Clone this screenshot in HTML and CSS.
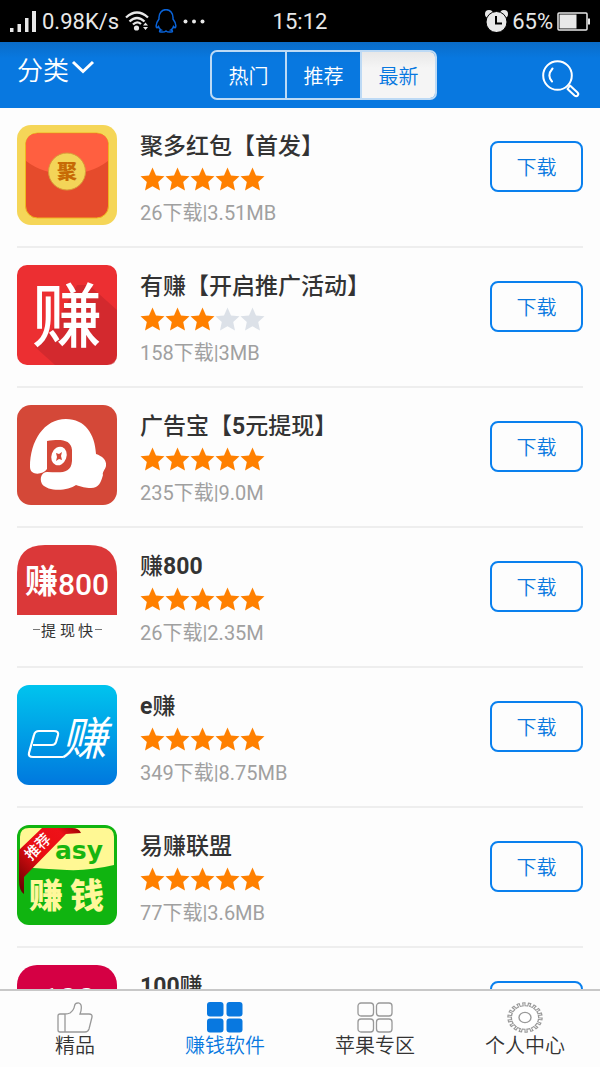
FILE: index.html
```html
<!DOCTYPE html>
<html lang="zh-CN">
<head>
  <title>赚钱软件</title>
  <meta charset="utf-8"/>
  <meta name="viewport" content="width=device-width, initial-scale=1">
  <link rel="stylesheet" href="styles.css">
</head>
<body>
  <!-- shared shapes -->
  <svg class="defs" width="0" height="0">
    <symbol id="star" viewBox="0 0 25 24">
      <path d="M12.5 .5 L16 8.500 L24.500 9.300 L18.200 15 L20 23.500 L12.5 19.300 L5 23.500 L6.800 15 L.5 9.300 L9 8.500 Z"/>
    </symbol>
    <symbol id="stars" viewBox="0 0 125 24">
      <use href="#star" x="0" width="25" height="24"/>
      <use href="#star" x="25" width="25" height="24"/>
      <use href="#star" x="50" width="25" height="24"/>
      <use href="#star" x="75" width="25" height="24"/>
      <use href="#star" x="100" width="25" height="24"/>
    </symbol>
  </svg>

  <div class="status">
    <div class="status-left">
      <svg width="26" height="21" viewBox="0 0 26 21" fill="#e8e8e8">
        <path d="M0 17h3.500v4H0zM7.500 13h3.500v8H7.500zM15 7h3.500v14H15zM22 0h4v21h-4z"/>
      </svg>
      <span>0.98K/s</span>
      <svg width="24" height="20" viewBox="0 0 24 20" fill="none" stroke="#e8e8e8" stroke-width="2.300">
        <path d="M1 6.500Q12 -3.500 23 6.500M4.500 10.500Q12 3.500 19.500 10.500M8 13.500Q12 9.500 16 13"/>
        <circle cx="11.500" cy="17" r="2.600" fill="#e8e8e8" stroke="none"/>
        <path d="M18 14.500l2.500-3 2.500 3zM18 16l2.500 3 2.500-3z" fill="#e8e8e8" stroke="none"/>
      </svg>
      <svg width="22" height="24" viewBox="0 0 22 24" fill="none" stroke="#0a63d8" stroke-width="1.500">
        <path d="M4 10C3 -2.500 19 -2.500 18 10C19.500 12 21.500 16 20.500 18.500C20 19.500 19 18 18.500 17.500C18 19.500 17 20.500 16 21C18 21.500 18 23 16 23C13.500 23.300 12 23 11 22C10 23 8.500 23.300 6 23C4 23 4 21.500 6 21C5 20.500 4 19.500 3.500 17.500C3 18 2 19.500 1.500 18.500C.5 16 2.500 12 4 10Z"/>
      </svg>
      <svg width="22" height="5" viewBox="0 0 22 5" fill="#e8e8e8">
        <circle cx="2.500" cy="2.500" r="2"/><circle cx="11" cy="2.500" r="2"/><circle cx="19.500" cy="2.500" r="2"/>
      </svg>
    </div>
    <span>15:12</span>
    <div class="status-right">
      <svg width="23" height="22" viewBox="0 0 23 22">
        <circle cx="4" cy="4" r="4" fill="#e8e8e8"/><circle cx="19" cy="4" r="4" fill="#e8e8e8"/>
        <circle cx="11.500" cy="12" r="10.500" fill="#e8e8e8" stroke="#000"/>
        <path d="M11 6v7.500h6" fill="none" stroke="#000" stroke-width="2"/>
      </svg>
      <span>65%</span>
      <svg width="33" height="19" viewBox="0 0 33 19">
        <rect x="1" y="1" width="29" height="17" rx="1" fill="none" stroke="#e8e8e8" stroke-width="1.500"/>
        <rect x="2.500" y="2.500" width="17" height="14" fill="#e8e8e8"/>
        <path d="M31 6.500h2v6h-2z" fill="#e8e8e8"/>
      </svg>
    </div>
  </div>

  <header class="header">
    <button class="category">分类<svg width="24" height="14" viewBox="0 0 24 14" fill="none" stroke="#fff" stroke-width="3"><path d="M2 2l10 9.500L22 2"/></svg></button>
    <div class="segment">
      <button>热门</button>
      <button>推荐</button>
      <button class="active">最新</button>
    </div>
    <button class="search" aria-label="搜索">
      <svg width="38" height="38" viewBox="0 0 38 38" fill="none" stroke="#fff" stroke-width="2">
        <circle cx="15.500" cy="15.500" r="14.300"/>
        <path d="M10.500 8.500Q4.500 15.500 10 21.500M25.500 29l2.500-3.500 7.500 7c2 2-.5 5-3 3z" stroke-linecap="round" stroke-linejoin="round"/>
      </svg>
    </button>
  </header>

  <main class="list">
    <article class="app">
      <svg class="logo" viewBox="0 0 100 100">
        <rect width="100" height="100" rx="14" fill="#f5d658"/>
        <rect x="8.500" y="8" width="83" height="85" rx="12" fill="#e54b2c" stroke="#f0b51e"/>
        <path d="M9 36V20Q9 8.500 21 8.500H79Q91 8.500 91 20V36Q74 49 50 49T9 36Z" fill="#ff5f40"/>
        <circle cx="50" cy="46.500" r="18.500" fill="#f3d458" stroke="#d99a38"/>
        <text x="50" y="54" font-size="20" font-weight="900" fill="#c76a05" text-anchor="middle">聚</text>
      </svg>
      <div class="info">
        <h2>聚多红包【首发】</h2>
        <svg class="stars"><use href="#stars"/></svg>
        <p>26下载|3.51MB</p>
      </div>
      <button class="download">下载</button>
    </article>

    <article class="app">
      <svg class="logo" viewBox="0 0 100 100">
        <rect width="100" height="100" rx="10" fill="#ec2f32"/>
        <path d="M72 20L100 45V90Q100 100 90 100H38L18 82L35 65L60 20Z" fill="#c3262b" opacity=".6"/>
        <text x="50" y="77" font-size="70" font-weight="500" fill="#fff" text-anchor="middle">赚</text>
      </svg>
      <div class="info">
        <h2>有赚【开启推广活动】</h2>
        <svg class="stars" viewBox="0 0 125 24">
          <use href="#star" x="0" width="25" height="24"/>
          <use href="#star" x="25" width="25" height="24"/>
          <use href="#star" x="50" width="25" height="24"/>
          <use class="off" href="#star" x="75" width="25" height="24"/>
          <use class="off" href="#star" x="100" width="25" height="24"/>
        </svg>
        <p>158下载|3MB</p>
      </div>
      <button class="download">下载</button>
    </article>

    <article class="app">
      <svg class="logo" viewBox="0 0 100 100">
        <rect width="100" height="100" rx="14" fill="#d44838"/>
        <path d="M13 62C13 36 27 14 49 14C68 14 78 29 79 49C85 51 90 55 89 61C88 65 85 67 86 70C84 77 82 83 74 83C68 83 65 82 59 80C51 86 31 87 25 79C22 73 25 67 30 67C42 67 54 70 55 56V45C54 34 43 34 30 36V64C26 70 13 71 13 62Z" fill="#fff"/>
        <ellipse cx="42" cy="51" rx="7.500" ry="9.500" fill="#fff" transform="rotate(20 42 51)"/>
        <path d="M39 48l3 1 3-2-1 4 1 4-3-1-3 2 1-4z" fill="#d44838"/>
      </svg>
      <div class="info">
        <h2>广告宝【<b>5</b>元提现】</h2>
        <svg class="stars"><use href="#stars"/></svg>
        <p>235下载|9.0M</p>
      </div>
      <button class="download">下载</button>
    </article>

    <article class="app">
      <svg class="logo" viewBox="0 0 100 100">
        <path d="M0 70V28Q0 0 28 0H72Q100 0 100 28V70Z" fill="#db3839"/>
        <text x="8" y="48" font-size="33" font-weight="700" fill="#fff">赚</text>
        <text x="41" y="50" font-size="30" font-weight="500" fill="#fff">800</text>
        <text x="24" y="91" font-size="15" font-weight="400" fill="#333">提</text>
        <text x="43" y="91" font-size="15" font-weight="400" fill="#333">现</text>
        <text x="61" y="91" font-size="15" font-weight="400" fill="#333">快</text>
        <path d="M16 84.500h7M78 84.500h7" stroke="#777"/>
      </svg>
      <div class="info">
        <h2>赚<b>800</b></h2>
        <svg class="stars"><use href="#stars"/></svg>
        <p>26下载|2.35M</p>
      </div>
      <button class="download">下载</button>
    </article>

    <article class="app">
      <svg class="logo" viewBox="0 0 100 100">
        <linearGradient id="sky" x2="0" y2="1"><stop stop-color="#00c4ee"/><stop offset="1" stop-color="#0078de"/></linearGradient>
        <rect width="100" height="100" rx="12" fill="url(#sky)"/>
        <path d="M16 60H35Q38 60 39 57L41 50Q42 46 37 46H22Q18 46 17 50L12 68Q11 72 16 72H46" fill="none" stroke="#fff" stroke-width="2.200"/>
        <text x="44" y="70" font-size="46" fill="#fff" font-style="italic">赚</text>
      </svg>
      <div class="info">
        <h2><b>e</b>赚</h2>
        <svg class="stars"><use href="#stars"/></svg>
        <p>349下载|8.75MB</p>
      </div>
      <button class="download">下载</button>
    </article>

    <article class="app">
      <svg class="logo" viewBox="0 0 100 100">
        <linearGradient id="ribbon" x1="0" y1="1" x2="1" y2="0"><stop stop-color="#5a0000"/><stop offset=".45" stop-color="#e90d12"/><stop offset=".8" stop-color="#ee1118"/><stop offset="1" stop-color="#900"/></linearGradient>
        <rect width="100" height="100" rx="12" fill="#10b410"/>
        <path d="M3 12Q3 3 12 3H88Q97 3 97 12V40Q72 46 50 45T3 42Z" fill="#fff894"/>
        <text x="38" y="34" font-family="DejaVu Sans" font-size="25" font-weight="700" fill="#18b510">asy</text>
        <text x="12" y="83" font-size="34" font-weight="900" fill="#fff79b">赚</text>
        <text x="53" y="83" font-size="34" font-weight="900" fill="#fff79b">钱</text>
        <path d="M2 25L25 3H55Q62 3 64 8L49 9L7 52V69Q2 66 2 55Z" fill="url(#ribbon)"/>
        <text x="21" y="27" font-size="15" font-weight="500" fill="#fff" text-anchor="middle" transform="rotate(-45 21 22)">推荐</text>
      </svg>
      <div class="info">
        <h2>易赚联盟</h2>
        <svg class="stars"><use href="#stars"/></svg>
        <p>77下载|3.6MB</p>
      </div>
      <button class="download">下载</button>
    </article>

    <article class="app">
      <svg class="logo" viewBox="0 0 100 100">
        <rect width="100" height="100" rx="20" fill="#d50044"/>
        <text x="51" y="45" font-size="32" font-weight="700" fill="#fff" text-anchor="middle">100</text>
      </svg>
      <div class="info">
        <h2><b>100</b>赚</h2>
        <svg class="stars"><use href="#stars"/></svg>
      </div>
      <button class="download">下载</button>
    </article>
  </main>

  <nav class="tabs">
    <a href="#">
      <svg width="36" height="31" viewBox="0 0 36 31" fill="none" stroke="#999" stroke-width="1.300">
        <path d="M8 12H3Q1 12 1 14V28Q1 30 3 30H28Q31 30 32 27L35 15Q35.500 12 32 12H23Q25 7 24 3Q23 .500 20.500 1Q18 1 17.500 4Q17 8 13 11Q11 12 8 12V30"/>
      </svg>
      <span>精品</span>
    </a>
    <a href="#" class="current">
      <svg width="36" height="31" viewBox="0 0 36 31" fill="#0878e0">
        <rect width="16.500" height="14.500" rx="3"/><rect x="19.500" width="16" height="14.500" rx="3"/>
        <rect y="16.500" width="16.500" height="14" rx="3"/><rect x="19.500" y="16.500" width="16" height="14" rx="3"/>
      </svg>
      <span>赚钱软件</span>
    </a>
    <a href="#">
      <svg width="36" height="31" viewBox="0 0 36 31" fill="none" stroke="#999" stroke-width="1.300">
        <rect x="1" y="1" width="15.500" height="13" rx="3"/><rect x="19.500" y="1" width="15.500" height="13" rx="3"/>
        <rect x="1" y="17" width="15.500" height="13" rx="3"/><rect x="19.500" y="17" width="15.500" height="13" rx="3"/>
      </svg>
      <span>苹果专区</span>
    </a>
    <a href="#">
      <svg width="36" height="31" viewBox="0 0 36 36" preserveAspectRatio="none" fill="none">
        <circle cx="18" cy="18" r="15.500" pathLength="36" stroke="#999" stroke-width="4.500" stroke-dasharray="1.200 .800"/>
        <circle cx="18" cy="18" r="14.300" fill="#999"/>
        <circle cx="18" cy="18" r="14.300" pathLength="36" stroke="#fff" stroke-width="4.500" stroke-dasharray=".350 1.650" stroke-dashoffset="-.425"/>
        <circle cx="18" cy="18" r="13" fill="#fff"/>
        <circle cx="18" cy="18" r="6" stroke="#999" stroke-width="1.400"/>
      </svg>
      <span>个人中心</span>
    </a>
  </nav>
</body>
</html>
```

FILE: styles.css
```css
* {
	box-sizing: border-box;
}
body {
	margin: 0;
	height: 100vh;
	display: flex;
	flex-direction: column;
	background: #fdfdfd;
	color: #333;
	font-family: Roboto, "Noto Sans CJK SC", sans-serif;
	font-size: 20px;
}
.defs {
	position: absolute;
}
button {
	padding: 0;
	border: 0;
	background: none;
	font: inherit;
	color: inherit;
	cursor: pointer;
}

/* status bar */
.status {
	flex: none;
	display: grid;
	grid-template-columns: 1fr auto 1fr;
	align-items: center;
	height: 42px;
	padding: 0 10px;
	background: #000;
	color: #e8e8e8;
	font-size: 22px;
}
.status-left,
.status-right {
	display: flex;
	align-items: center;
	gap: 6px;
}
.status-right {
	justify-content: flex-end;
	gap: 4px;
}

/* header */
.header {
	flex: none;
	display: flex;
	justify-content: space-between;
	align-items: flex-start;
	height: 66px;
	padding: 8px 20px 8px 17px;
	background: linear-gradient(#0a6cc8, #0878e0 16px);
	color: #fff;
}
.category {
	display: flex;
	align-items: center;
	gap: 2px;
	width: 88px;
	font-size: 26px;
	font-weight: 350;
	line-height: 42px;
}
.category svg {
	margin-bottom: 8px;
}
.segment {
	display: flex;
	width: 227px;
	height: 50px;
	border: 2px solid #bddaf5;
	border-radius: 7px;
	overflow: hidden;
}
.segment button {
	flex: 1;
	font-weight: 350;
}
.segment button + button {
	border-left: 2px solid #bddaf5;
}
.segment .active {
	background: linear-gradient(#e8e8e8, #f5f5f5 16px);
	color: #0878e0;
}
.search {
	margin-top: 10px;
	height: 38px;
}

/* app list */
.list {
	flex: 1;
	min-height: 0;
	overflow-y: auto;
	scrollbar-width: none;
	padding: 0 17px;
}
.app {
	display: flex;
	align-items: flex-start;
	height: 140px;
	padding-top: 17px;
	border-bottom: 2px solid #eee;
}
.logo {
	flex: none;
	width: 100px;
	height: 100px;
}
.info {
	flex: 1;
	padding: 7px 0 0 23px;
}
.info h2 {
	margin: 0 0 5px;
	font-size: 23px;
	font-weight: 500;
	line-height: 30px;
}
.info p {
	margin: 10px 0 0;
	color: #a0a0a0;
	font-weight: 400;
	line-height: 24px;
}
.stars {
	display: block;
	width: 125px;
	height: 24px;
	fill: #ff8000;
}
.stars .off {
	fill: #dce1e8;
}
.download {
	width: 93px;
	height: 51px;
	margin-top: 16px;
	border: 2px solid #0a80ee;
	border-radius: 8px;
	color: #0878e0;
	font-weight: 350;
}

/* bottom tabs */
.tabs {
	flex: none;
	display: grid;
	grid-template-columns: repeat(4, 1fr);
	height: 78px;
	padding-top: 11px;
	border-top: 2px solid #c8c8c8;
}
.tabs a {
	display: flex;
	flex-direction: column;
	align-items: center;
	color: #333;
	font-weight: 350;
	line-height: 26px;
	text-decoration: none;
}
.tabs .current {
	color: #0878e0;
}
```
